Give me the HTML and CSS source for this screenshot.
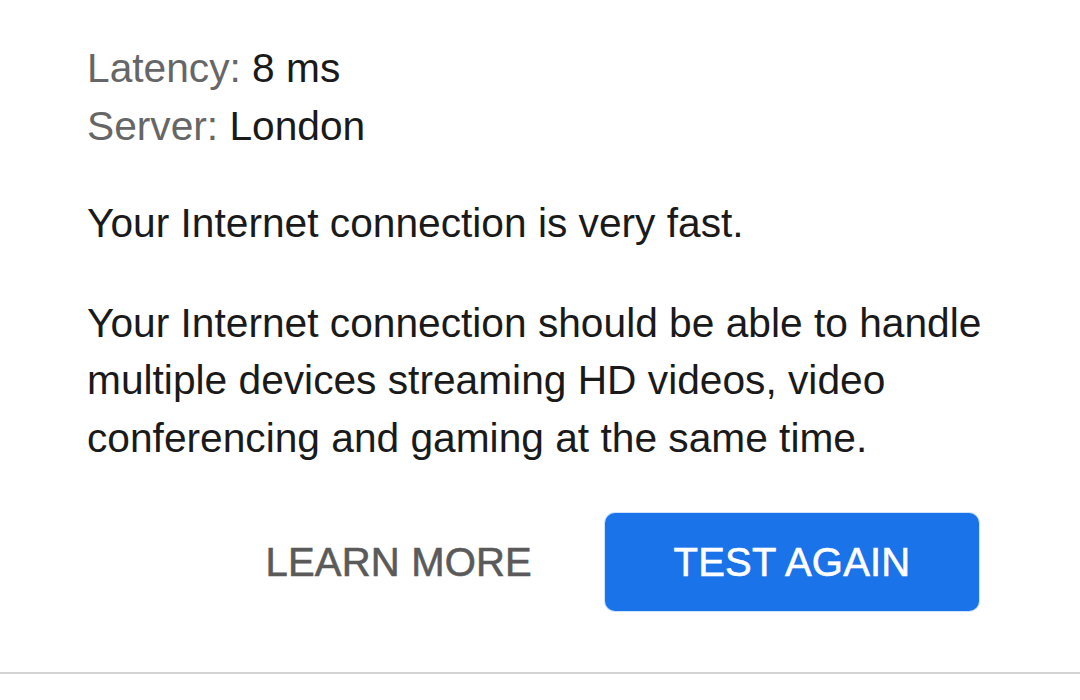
FILE: index.html
```html
<!DOCTYPE html>
<html lang="en">
<head>
    <meta charset="UTF-8">
    <meta name="viewport" content="width=device-width, initial-scale=1.0">
    <title>Speed Test Result</title>
    <link rel="stylesheet" href="styles.css">
</head>
<body>
    <div class="card">
        <div class="stats">
            <div class="stat"><span class="label">Latency:</span> 8 ms</div>
            <div class="stat"><span class="label">Server:</span> London</div>
        </div>
        <p class="summary">Your Internet connection is very fast.</p>
        <p class="summary">Your Internet connection should be able to handle multiple devices streaming HD videos, video conferencing and gaming at the same time.</p>
        <div class="actions">
            <button class="btn-text">LEARN MORE</button>
            <button class="btn-primary">TEST AGAIN</button>
        </div>
    </div>
</body>
</html>
```

FILE: styles.css
```css
body {
    margin: 0;
    padding: 0;
    background-color: #fff;
    font-family: "Liberation Sans", Arial, sans-serif;
    color: #1a1a1a;
}
.card {
    padding: 40px 60px 0 87px;
    height: 632px;
    border-bottom: 2px solid #d4d4d4;
}
.stats {
    font-size: 40.7px;
    line-height: 57.5px;
}
.label {
    color: #666;
}
.summary {
    font-size: 40.7px;
    line-height: 57.5px;
    margin: 40px 0 0;
}
.summary + .summary {
    margin-top: 42px;
}
.actions {
    display: flex;
    justify-content: flex-end;
    align-items: center;
    gap: 73px;
    margin-top: 46px;
    padding-right: 41px;
}
button {
    font-family: inherit;
    font-size: 40px;
    border: none;
    cursor: pointer;
}
.btn-text {
    background: none;
    color: #5a5a5a;
    padding: 0;
    letter-spacing: 0.2px;
    -webkit-text-stroke: 0.6px #5a5a5a;
}
.btn-primary {
    width: 374px;
    height: 98px;
    background-color: #1a73e8;
    color: #fff;
    border-radius: 10px;
    box-shadow: 0 0 0 1px #cfe2fb;
    letter-spacing: 0.2px;
    -webkit-text-stroke: 0.6px #fff;
}
.btn-primary:hover {
    background-color: #1765cc;
}
```
